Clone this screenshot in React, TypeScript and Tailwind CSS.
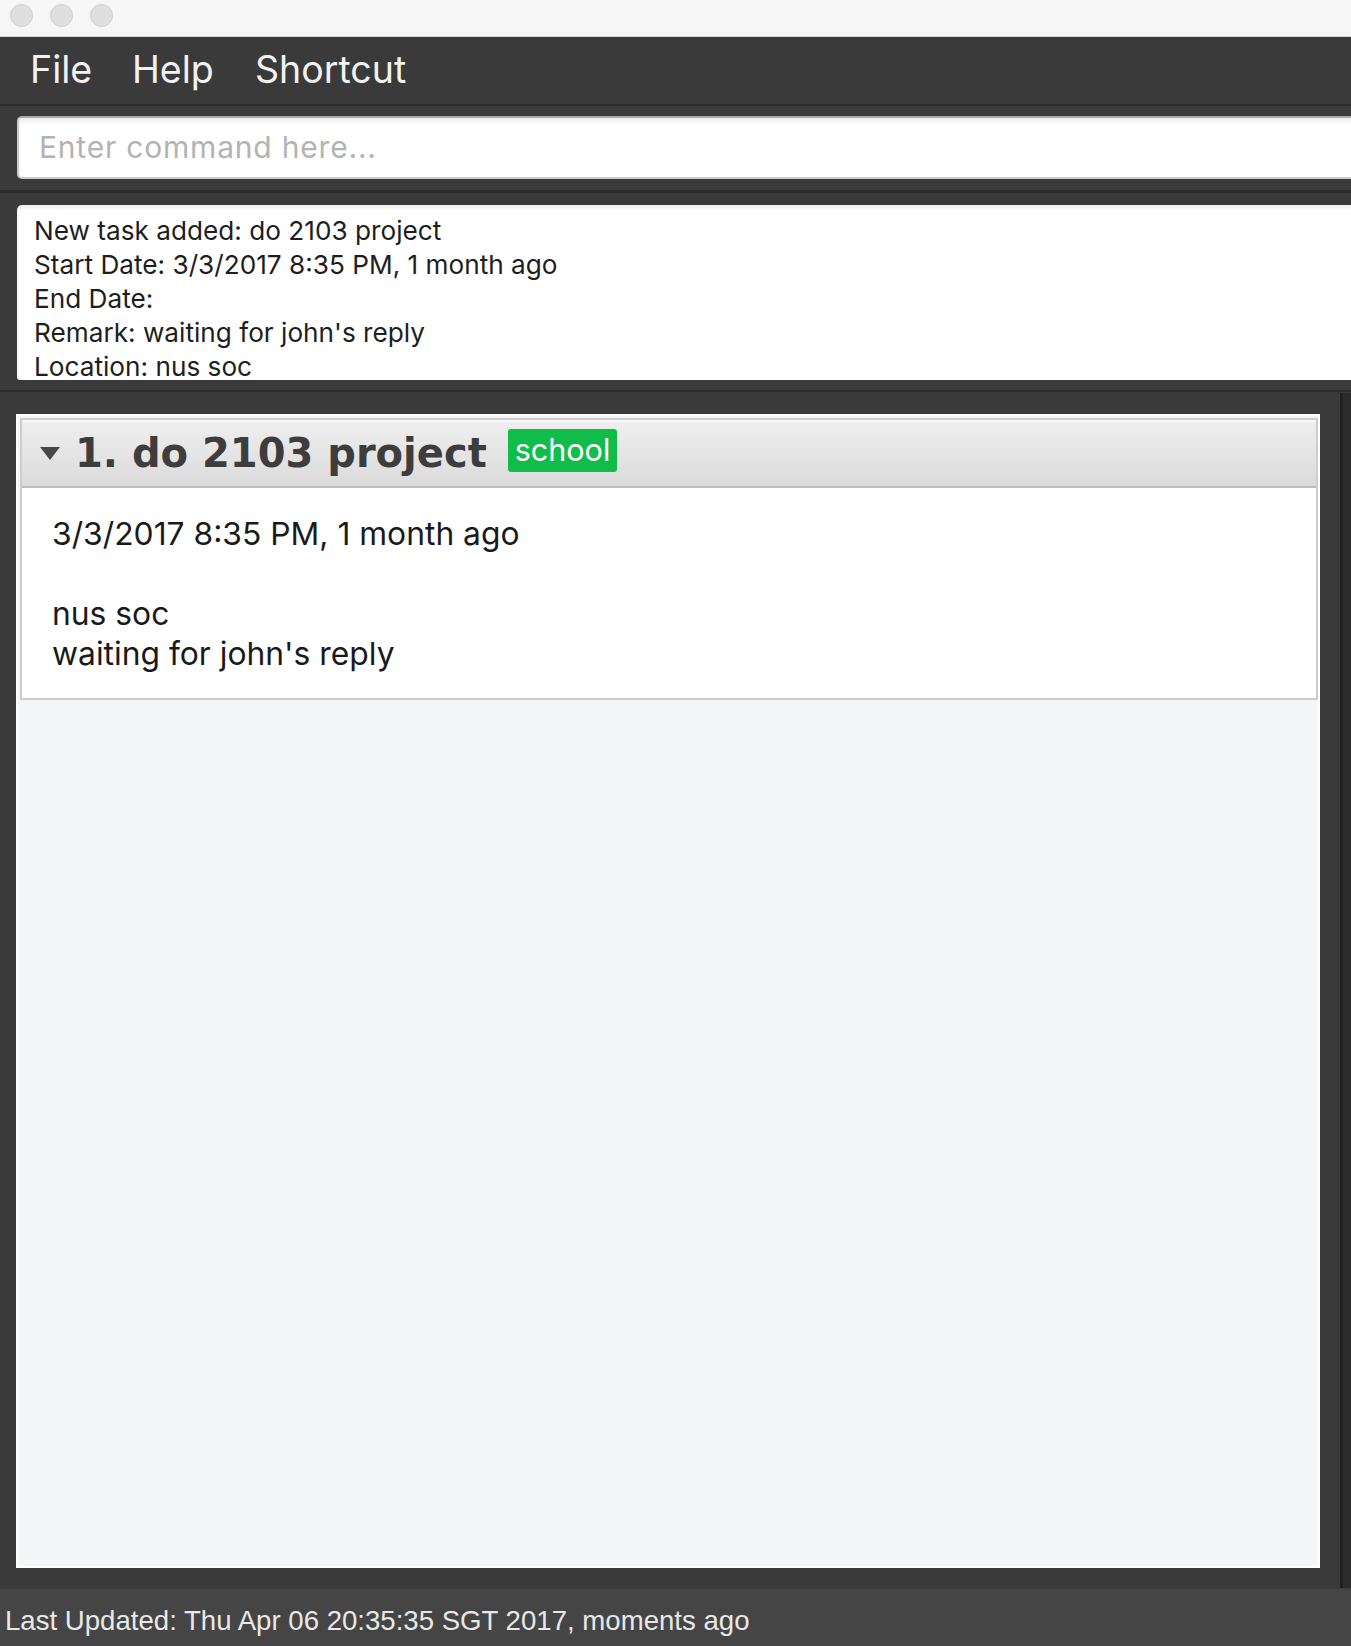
import React from "react";

function TrafficLight() {
  return <div className="w-[23px] h-[23px] rounded-full bg-[#dfdfdf] border border-[#cecece]" />;
}

export default function App() {
  const resultLines = [
    "New task added: do 2103 project",
    "Start Date: 3/3/2017 8:35 PM, 1 month ago",
    "End Date:",
    "Remark: waiting for john's reply",
    "Location: nus soc",
  ];
  return (
    <div className="w-[1351px] h-[1646px] overflow-hidden flex flex-col bg-[#3a3a3a] [font-family:Inter,'Liberation_Sans',sans-serif]">
      {/* title bar */}
      <div className="h-[37px] shrink-0 bg-[#f6f6f6] border-b border-[#d4d4d4] flex items-start pt-[4px] pl-[10px] gap-[17px]">
        <TrafficLight />
        <TrafficLight />
        <TrafficLight />
      </div>

      {/* menu bar */}
      <div className="h-[67px] shrink-0 flex items-center pl-[30px] text-[37.5px] text-[#f2f2f2]">
        <span className="w-[102px]">File</span>
        <span className="w-[123px]">Help</span>
        <span>Shortcut</span>
      </div>
      <div className="h-[2px] shrink-0 bg-[#2b2b2b]" />

      {/* command box */}
      <div className="shrink-0 pt-[10px] pb-[11px] pl-[17px] flex">
        <div className="h-[63px] flex-1 -mr-[12px] bg-white rounded-[5px] border-2 border-[#cbcbcb] border-t-[#a9a9a9] shadow-[inset_0_3px_4px_rgba(0,0,0,0.08)] flex items-center pl-[20px]">
          <span className="text-[30px] text-[#b3b3b3] tracking-[0.8px]">Enter command here...</span>
        </div>
      </div>
      <div className="h-[3px] shrink-0 bg-[#2b2b2b]" />

      {/* result box */}
      <div className="shrink-0 pt-[12px] pb-[10px] pl-[17px] flex">
        <div className="h-[175px] flex-1 -mr-[12px] bg-white rounded-tl-[5px] rounded-bl-[3px] shadow-[inset_0_3px_4px_rgba(0,0,0,0.07)] overflow-hidden pl-[17px] pt-[9px] text-[26.2px] leading-[34px] text-[#1e1e1e]">
          {resultLines.map((l) => (
            <div key={l} className="whitespace-nowrap">{l}</div>
          ))}
        </div>
      </div>
      <div className="h-[2px] shrink-0 bg-[#2b2b2b]" />

      {/* list area */}
      <div className="h-[1197px] shrink-0 flex items-start">
        <div className="mt-[22px] ml-[16px] w-[1304px] h-[1154px] bg-[#f4f5f7] border-2 border-white">
          <div className="mt-[2px] ml-[2px] border-2 border-[#cdcdcd] bg-white">
            <div className="h-[68px] border-b-2 border-[#bdbdbd] bg-gradient-to-b from-[#efefef] to-[#dbdbdb] shadow-[inset_0_2px_0_#f7f7f7] flex items-center pl-[18px]">
              <svg width="20" height="13" viewBox="0 0 20 13" className="shrink-0">
                <polygon points="0,0 20,0 10,13" fill="#474747" />
              </svg>
              <span className="ml-[15px] [font-family:'DejaVu_Sans',sans-serif] font-bold text-[40px] text-[#3d3d3d] whitespace-nowrap leading-none">
                1. do 2103 project
              </span>
              <span className="ml-[21px] mb-[6px] h-[43px] px-[7px] flex items-center rounded-[3px] bg-[#10bd4b] text-white text-[30.5px] leading-none">
                school
              </span>
            </div>
            <div className="h-[210px] pl-[30px] pt-[26px] text-[31.8px] leading-[40px] text-[#1a1a1a]">
              <div>3/3/2017 8:35 PM, 1 month ago</div>
              <div>&nbsp;</div>
              <div>nus soc</div>
              <div>waiting for john's reply</div>
            </div>
          </div>
        </div>
        <div className="ml-[20px] mt-[1px] w-[11px] h-[1195px] bg-[#2c2c2c] border-l-[3px] border-[#212121]" />
      </div>

      {/* status bar */}
      <div className="h-[57px] shrink-0 bg-[#454545] flex items-center pl-[5px] pt-[6px] text-[27.6px] text-[#e8e8e8] [font-family:'Liberation_Sans',sans-serif] whitespace-nowrap">
        Last Updated: Thu Apr 06 20:35:35 SGT 2017, moments ago
      </div>
    </div>
  );
}
